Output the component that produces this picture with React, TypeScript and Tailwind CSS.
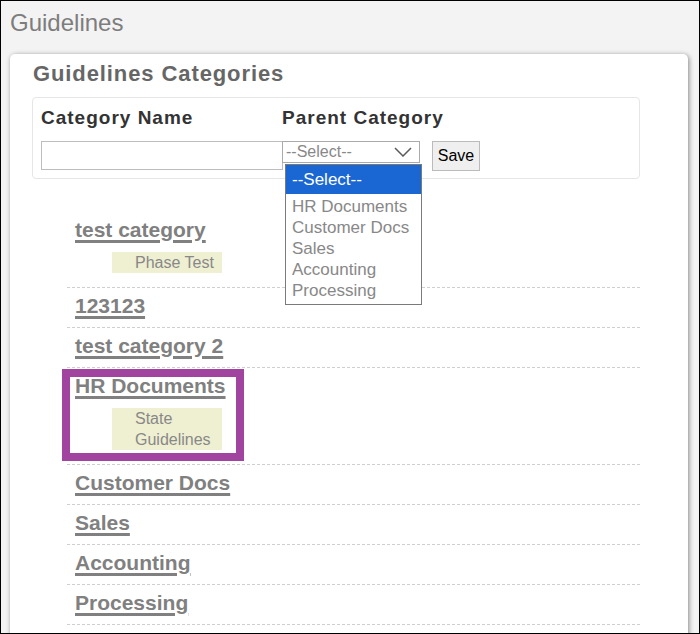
const categories = [
  { name: "test category", tag: "Phase Test" },
  { name: "123123" },
  { name: "test category 2" },
  { name: "HR Documents", tag: "State Guidelines", highlight: true },
  { name: "Customer Docs" },
  { name: "Sales" },
  { name: "Accounting" },
  { name: "Processing" },
];

const parentOptions = ["HR Documents", "Customer Docs", "Sales", "Accounting", "Processing"];

function CategoryRow({
  name,
  tag,
  highlight,
}: Readonly<{ name: string; tag?: string; highlight?: boolean }>) {
  return (
    <div className="relative border-b border-dashed border-[#cfcfcf] pl-[8px] pt-[6px] pb-[9px]">
      <a
        href="#"
        className="block text-[21px] font-bold leading-[24px] text-[#808080] underline decoration-[3px] underline-offset-[3px]"
      >
        {name}
      </a>
      {tag ? (
        <div className="mt-[10px] mb-[5px] ml-[37px] w-[110px] bg-[#efefd2] pl-[23px] text-[16px] leading-[21px] text-[#888888]">
          {tag}
        </div>
      ) : null}
      {highlight ? (
        <div className="absolute -left-[5px] top-[1px] h-[92px] w-[182px] border-[8px] border-[#a0449f]" />
      ) : null}
    </div>
  );
}

export default function App() {
  return (
    <div className="relative h-[634px] w-[700px] overflow-hidden border border-black bg-[#f3f3f3] font-['Liberation_Sans',Arial,sans-serif]">
      <h1 className="pl-[9px] pt-[8px] text-[24px] leading-[28px] text-[#7d7d7d]">Guidelines</h1>

      <div className="ml-[9px] mt-[17px] h-[620px] w-[678px] rounded-[5px] bg-white pt-[7px] shadow-[1px_1px_5px_rgba(0,0,0,0.45)]">
        <h2 className="pl-[23px] text-[22px] font-bold leading-[26px] tracking-[0.9px] text-[#666666]">
          Guidelines Categories
        </h2>

        <div className="relative ml-[22px] mt-[10px] h-[82px] w-[608px] rounded-[4px] border border-[#e6e6e6] pl-[8px] pt-[9px]">
          <div className="flex text-[19px] font-bold leading-[22px] tracking-[1px] text-[#333333]">
            <span className="w-[241px]">Category Name</span>
            <span>Parent Category</span>
          </div>
          <div className="mt-[12px] flex items-start">
            <input className="h-[29px] w-[242px] border border-[#bdbdbd] bg-white px-1 outline-none" />
            <div className="-ml-[1px] flex h-[22px] w-[138px] items-center justify-between border border-[#aaaaaa] bg-white pl-[3px] pr-[7px] text-[16px] text-[#888888]">
              <span>--Select--</span>
              <svg width="18" height="10" viewBox="0 0 18 10" fill="none">
                <path d="M1 1l8 8 8-8" stroke="#5a5a5a" strokeWidth="1.5" />
              </svg>
            </div>
            <button
              type="button"
              className="ml-[12px] h-[30px] w-[48px] border border-[#bbbbbb] bg-[#efefef] text-[16px] text-black"
            >
              Save
            </button>
          </div>

          {/* lista desplegada del select de categoría padre */}
          <div className="absolute left-[252px] top-[66px] z-10 w-[137px] border border-[#7a7a7a] bg-white pb-[3px]">
            <div className="flex h-[29px] items-center bg-[#1a67d4] pl-[6px] text-[17px] text-white">--Select--</div>
            <div className="pt-[2px]">
              {parentOptions.map((option) => (
                <div key={option} className="pl-[6px] text-[17px] leading-[21px] text-[#888888]">
                  {option}
                </div>
              ))}
            </div>
          </div>
        </div>

        <div className="ml-[57px] mt-[33px] w-[573px]">
          {categories.map((c) => (
            <CategoryRow key={c.name} name={c.name} tag={c.tag} highlight={c.highlight} />
          ))}
        </div>
      </div>
    </div>
  );
}
